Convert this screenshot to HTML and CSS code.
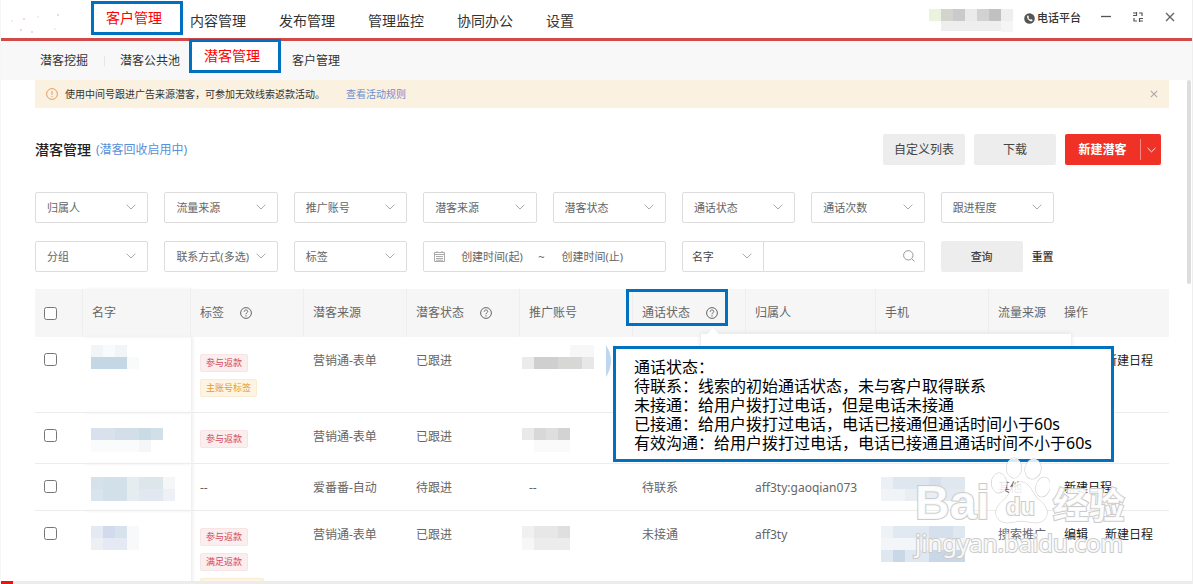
FILE: index.html
```html
<!DOCTYPE html>
<html lang="zh-CN">
<head>
<meta charset="utf-8">
<title>潜客管理</title>
<link rel="stylesheet" href="styles.css">
</head>
<body>
<svg class="defs" aria-hidden="true">
  <symbol id="chevron" viewBox="0 0 10 6"><path d="M.6.7 5 5 9.400.7" fill="none" stroke="currentColor"/></symbol>
  <symbol id="help" viewBox="0 0 12 12"><circle cx="6" cy="6" r="5.400" fill="none" stroke="currentColor"/><path d="M4.200 4.700C4.300 2.400 7.800 2.500 7.700 4.600 7.700 5.800 6 5.700 6 7.300M6 8.300v1.200" fill="none" stroke="currentColor"/></symbol>
  <symbol id="cross" viewBox="0 0 10 10"><path d="M1 1l8 8M9 1l-8 8" fill="none" stroke="currentColor" stroke-width="1.400"/></symbol>
</svg>
<div class="app">
  <header class="topbar">
    <div class="logo">
      <svg width="70" height="26" viewBox="0 0 70 26"><g fill="#f3c9c9"><circle cx="17" cy="9" r="1"/><circle cx="14" cy="20" r="1"/><circle cx="25" cy="22" r="1"/><circle cx="51" cy="5" r="1"/></g><g fill="#e3ecf0"><circle cx="31" cy="7" r="1"/><circle cx="48" cy="19" r="1"/><circle cx="5" cy="11" r="1"/></g></svg>
    </div>
    <nav class="nav">
      <a class="marked" href="#">客户管理</a>
      <a href="#">内容管理</a>
      <a href="#">发布管理</a>
      <a href="#">管理监控</a>
      <a href="#">协同办公</a>
      <a href="#">设置</a>
    </nav>
    <div class="tools">
      <svg class="account" width="84" height="23" viewBox="0 0 84 23"><path fill="#eaf3dc" d="M0 0h12v12H0z"/><path fill="#d4d4ce" d="M12 0h12v12H12z"/><path fill="#cacaca" d="M24 0h12v12H24z"/><path fill="#e9eaec" d="M36 0h12v12H36z"/><path fill="#d2d2d3" d="M48 0h12v12H48z"/><path fill="#c1c1c1" d="M60 0h12v12H60z"/><path fill="#eee" d="M72 0h12v12H72zM12 12h60v10H12z"/><path fill="#f5f5f5" d="M72 12h12v11H72z"/></svg>
      <a class="phone" href="#"><svg width="11" height="11" viewBox="0 0 11 11"><circle cx="5.500" cy="5.500" r="5.300" fill="#555"/><path d="M3.200 2.700 4.300 2.400 5 4.200 4.300 4.900 6.200 6.800 7 6.100 8.600 6.900 8.200 8.200C5.500 8.800 2.500 5.700 3.200 2.700z" fill="#fff"/></svg>电话平台</a>
      <button aria-label="最小化"><svg width="10" height="10" viewBox="0 0 10 10"><path d="M0 4.500h10" stroke="#555" stroke-width="1.300"/></svg></button>
      <button aria-label="还原"><svg width="10" height="10" viewBox="0 0 10 10" fill="none" stroke="#555" stroke-width="1.200"><path d="M0 1h3.500M3.500 0v3.500H0M6 1h3v3M1 6v3h3M6.500 10V6.500H10M7 9h3"/></svg></button>
      <button aria-label="关闭"><svg width="10" height="10"><use href="#cross"/></svg></button>
    </div>
  </header>
  <nav class="subnav">
    <a href="#">潜客挖掘</a>
    <span class="bar"></span>
    <a href="#">潜客公共池</a>
    <a class="marked" href="#">潜客管理</a>
    <a href="#">客户管理</a>
  </nav>
  <main class="content">
    <div class="alert">
      <svg width="12" height="12" viewBox="0 0 12 12" fill="none" stroke="#e59a63"><circle cx="6" cy="6" r="5.400"/><path d="M6 3v4M6 8v1"/></svg>
      <p>使用中间号跟进广告来源潜客，可参加无效线索返款活动。</p>
      <a href="#">查看活动规则</a>
      <button aria-label="关闭提示"><svg width="8" height="8"><use href="#cross"/></svg></button>
    </div>
    <div class="heading">
      <h1>潜客管理</h1>
      <a href="#">(潜客回收启用中)</a>
      <div class="actions">
        <button class="btn">自定义列表</button>
        <button class="btn">下载</button>
        <div class="split"><button>新建潜客</button><button class="more" aria-label="更多"><svg width="9" height="6"><use href="#chevron"/></svg></button></div>
      </div>
    </div>
    <form class="filters">
      <div class="pick"><select aria-label="归属人"><option>归属人</option></select><svg><use href="#chevron"/></svg></div>
      <div class="pick"><select aria-label="流量来源"><option>流量来源</option></select><svg><use href="#chevron"/></svg></div>
      <div class="pick"><select aria-label="推广账号"><option>推广账号</option></select><svg><use href="#chevron"/></svg></div>
      <div class="pick"><select aria-label="潜客来源"><option>潜客来源</option></select><svg><use href="#chevron"/></svg></div>
      <div class="pick"><select aria-label="潜客状态"><option>潜客状态</option></select><svg><use href="#chevron"/></svg></div>
      <div class="pick"><select aria-label="通话状态"><option>通话状态</option></select><svg><use href="#chevron"/></svg></div>
      <div class="pick"><select aria-label="通话次数"><option>通话次数</option></select><svg><use href="#chevron"/></svg></div>
      <div class="pick"><select aria-label="跟进程度"><option>跟进程度</option></select><svg><use href="#chevron"/></svg></div>
      <div class="pick"><select aria-label="分组"><option>分组</option></select><svg><use href="#chevron"/></svg></div>
      <div class="pick"><select aria-label="联系方式"><option>联系方式(多选)</option></select><svg><use href="#chevron"/></svg></div>
      <div class="pick"><select aria-label="标签"><option>标签</option></select><svg><use href="#chevron"/></svg></div>
      <div class="dates">
        <svg width="11" height="11" viewBox="0 0 11 11" fill="none" stroke="#aaa"><path d="M.5 1.500h10v9H.5zM.5 3.500h10M2 5.500h7M2 7.500h7M2 9.200h7M3 0v2M8 0v2"/></svg>
        <input aria-label="创建时间起" placeholder="创建时间(起)"><span>~</span><input aria-label="创建时间止" placeholder="创建时间(止)">
      </div>
      <div class="search">
        <div class="pick"><select aria-label="搜索字段"><option>名字</option></select><svg><use href="#chevron"/></svg></div>
        <input aria-label="搜索内容">
        <svg class="lens" width="12" height="12" viewBox="0 0 12 12" fill="none" stroke="#999"><circle cx="5.300" cy="5.300" r="4.700"/><path d="M8.700 8.700 11.500 11.500"/></svg>
      </div>
      <div class="submit"><button class="btn" type="button">查询</button><button class="reset" type="reset">重置</button></div>
    </form>
    <table class="grid">
      <colgroup><col class="c-check"><col class="c-name"><col class="c-std"><col class="c-source"><col class="c-std"><col class="c-std"><col class="c-std"><col class="c-owner"><col class="c-std"><col class="c-flow"><col></colgroup>
      <thead>
        <tr>
          <th><input type="checkbox" aria-label="全选"></th>
          <th class="fixed">名字</th>
          <th>标签<svg class="help"><use href="#help"/></svg></th>
          <th>潜客来源</th>
          <th>潜客状态<svg class="help"><use href="#help"/></svg></th>
          <th>推广账号</th>
          <th class="anchor">通话状态<svg class="help"><use href="#help"/></svg>
            <div class="popover"></div>
            <div class="outline"></div>
            <svg class="crescent" width="6" height="32" viewBox="0 0 6 32"><path d="M0 0Q10 16 0 32z" fill="#bdd7ee"/></svg>
            <div class="note"><p>通话状态：</p><p>待联系：线索的初始通话状态，未与客户取得联系</p><p>未接通：给用户拨打过电话，但是电话未接通</p><p>已接通：给用户拨打过电话，电话已接通但通话时间小于60s</p><p>有效沟通：给用户拨打过电话，电话已接通且通话时间不小于60s</p></div>
          </th>
          <th>归属人</th>
          <th>手机</th>
          <th>流量来源</th>
          <th>操作</th>
        </tr>
      </thead>
      <tbody>
        <tr class="r-tall">
          <td><input type="checkbox" aria-label="选择第1行"></td>
          <td class="fixed"><svg class="mosaic" width="48" height="24" viewBox="0 0 48 24"><path fill="#f0f5f8" d="M0 0h12v12H0zM24 0h12v12H24z"/><path fill="#f9fbfb" d="M12 0h12v12H12zM36 12h12v12H36z"/><path fill="#c4d7e5" d="M0 12h36v12H0z"/></svg></td>
          <td><div class="tags"><span class="tag">参与返款</span><span class="tag amber">主账号标签</span></div></td>
          <td>营销通-表单</td>
          <td>已跟进</td>
          <td><svg class="mosaic acct" width="72" height="24" viewBox="0 0 72 24"><path fill="#f7f7f7" d="M48 0h24v12H48z"/><path fill="#ebebeb" d="M0 12h12v12H0z"/><path fill="#cfcfcf" d="M12 12h24v12H12z"/><path fill="#d7d7d5" d="M36 12h24v12H36z"/><path fill="#e7e7e7" d="M60 12h12v12H60z"/></svg></td>
          <td></td><td></td><td></td><td></td>
          <td><div class="ops"><a href="#">编辑</a><a href="#">新建日程</a></div></td>
        </tr>
        <tr class="r-mid">
          <td><input type="checkbox" aria-label="选择第2行"></td>
          <td class="fixed"><svg class="mosaic" width="72" height="24" viewBox="0 0 72 24"><path fill="#d9e1ee" d="M0 0h12v12H0z"/><path fill="#d9e1ea" d="M12 0h12v12H12z"/><path fill="#d2dfe8" d="M24 0h24v12H24z"/><path fill="#c9dce5" d="M48 0h12v12H48z"/><path fill="#d0dfe8" d="M60 0h12v12H60z"/><path fill="#fafbfb" d="M0 12h48v12H0z"/><path fill="#f4f6f8" d="M48 12h12v12H48z"/></svg></td>
          <td><div class="tags"><span class="tag">参与返款</span></div></td>
          <td>营销通-表单</td>
          <td>已跟进</td>
          <td><svg class="mosaic acct" width="48" height="24" viewBox="0 0 48 24"><path fill="#e9e9e9" d="M0 0h12v12H0z"/><path fill="#d8d8d8" d="M12 0h12v12H12z"/><path fill="#dedede" d="M24 0h12v12H24z"/><path fill="#d2d4d4" d="M36 0h12v12H36z"/><path fill="#fafafa" d="M12 12h36v12H12z"/></svg></td>
          <td></td><td></td><td></td><td></td><td></td>
        </tr>
        <tr class="r-short">
          <td><input type="checkbox" aria-label="选择第3行"></td>
          <td class="fixed"><svg class="mosaic" width="84" height="24" viewBox="0 0 84 24"><path fill="#d5e2ea" d="M0 0h12v12H0z"/><path fill="#d2e0e9" d="M12 0h24v24H12z"/><path fill="#e6edf0" d="M36 0h12v24H36z"/><path fill="#dde6eb" d="M48 0h24v12H48z"/><path fill="#f5f6f8" d="M72 0h12v12H72z"/><path fill="#dae4ee" d="M0 12h12v12H0z"/><path fill="#e1e8f0" d="M48 12h24v12H48z"/><path fill="#eef0f6" d="M72 12h12v12H72z"/></svg></td>
          <td>--</td>
          <td>爱番番-自动</td>
          <td>待跟进</td>
          <td>--</td>
          <td>待联系</td>
          <td>aff3ty:gaoqian073</td>
          <td><svg class="mosaic tel" width="84" height="24" viewBox="0 0 84 24"><path fill="#eaf0f5" d="M0 0h12v12H0z"/><path fill="#dee7ef" d="M12 0h36v12H12z"/><path fill="#d8e1eb" d="M48 0h12v12H48z"/><path fill="#e0e7ef" d="M60 0h24v12H60z"/><path fill="#f0f4f7" d="M0 12h24v12H0z"/><path fill="#e8eef4" d="M24 12h36v12H24z"/><path fill="#e3eaf1" d="M60 12h24v12H60z"/></svg></td>
          <td>其他</td>
          <td><div class="ops"><a href="#">新建日程</a></div></td>
        </tr>
        <tr class="r-last">
          <td><input type="checkbox" aria-label="选择第4行"></td>
          <td class="fixed"><svg class="mosaic" width="48" height="24" viewBox="0 0 48 24"><path fill="#e4e9f3" d="M0 0h12v12H0zM12 12h24v12H12z"/><path fill="#d2daee" d="M12 0h12v12H12z"/><path fill="#d7e3ec" d="M24 0h12v12H24z"/><path fill="#f7f9fa" d="M36 0h12v24H36z"/><path fill="#ecf0f4" d="M0 12h12v12H0z"/></svg></td>
          <td><div class="tags"><span class="tag">参与返款</span><span class="tag">满足返款</span><span class="tag amber wide"></span></div></td>
          <td>营销通-表单</td>
          <td>已跟进</td>
          <td><svg class="mosaic acct" width="48" height="24" viewBox="0 0 48 24"><path fill="#f0f0f0" d="M0 0h12v12H0z"/><path fill="#e7e7e7" d="M12 0h24v12H12z"/><path fill="#dfdfdf" d="M36 0h12v12H36z"/><path fill="#f7f7f7" d="M0 12h12v12H0z"/><path fill="#ececec" d="M12 12h36v12H12z"/></svg></td>
          <td>未接通</td>
          <td>aff3ty</td>
          <td><svg class="mosaic tel" width="84" height="36" viewBox="0 0 84 36"><path fill="#edf2f7" d="M0 0h12v12H0z"/><path fill="#e0e8f1" d="M12 0h36v12H12z"/><path fill="#d5e0ec" d="M48 0h24v12H48z"/><path fill="#dfe7f1" d="M72 0h12v12H72z"/><path fill="#f2f6f9" d="M0 12h84v12H0z"/><path fill="#dfe8f1" d="M0 24h12v12H0zM24 24h24v12H24z"/><path fill="#c9d8e6" d="M12 24h12v12H12zM48 24h36v12H48z"/></svg></td>
          <td>搜索推广</td>
          <td><div class="ops"><a href="#">编辑</a><a href="#">新建日程</a></div></td>
        </tr>
      </tbody>
    </table>
  </main>
  <footer class="foot"></footer>
  <div class="scrollbar"></div>
  <div class="watermark" aria-hidden="true">
    <div class="brand">
      <span class="bai">Bai</span>
      <span class="paw"><svg width="60" height="70" viewBox="0 0 60 70"><g fill="#fff" fill-opacity=".85" stroke="#ccc"><ellipse cx="9" cy="26" rx="7.500" ry="10"/><ellipse cx="24" cy="11" rx="7.500" ry="10"/><ellipse cx="43" cy="12" rx="8" ry="10" transform="rotate(12 43 12)"/><ellipse cx="53" cy="30" rx="7" ry="10" transform="rotate(14 53 30)"/><path d="M31 25C40 25 42 36 48 42 56 48 60 55 55 62 49 69 39 64 31 64 24 64 15 69 8 62 3 55 7 48 15 42 21 36 22 25 31 25z"/></g></svg><b>du</b></span>
      <span class="exp">经验</span>
    </div>
    <div class="site">jingyan.baidu.com</div>
  </div>
</div>
</body>
</html>
```

FILE: styles.css
```css
* { box-sizing: border-box; }
body { margin: 0; font-family: "Noto Sans", "Noto Sans CJK SC", sans-serif; font-size: 12px; line-height: 18px; color: #666; background: #fff; }
a { color: inherit; text-decoration: none; white-space: nowrap; }
p, h1 { margin: 0; }
button, input, select { margin: 0; padding: 0; border: 0; background: none; font: inherit; color: inherit; border-radius: 0; }
button { display: flex; align-items: center; justify-content: center; white-space: nowrap; }
svg { flex: none; }
.defs { display: none; }

.app { position: relative; display: flex; flex-direction: column; height: 100vh; overflow: hidden; border-left: 1px solid #f6f6f6; border-right: 1px solid #eee; }

.topbar { display: flex; height: 41px; border-bottom: 3px solid #d24a48; }
.logo { width: 90px; padding: 10px 0 0 6px; }
.nav { display: flex; gap: 33px; align-items: center; font-size: 14px; color: #333; }
.marked { display: flex; align-items: center; width: 92px; height: 34px; padding-left: 12px; border: 3px solid #0070c0; background: #fff; color: #f00; font-size: 14px; }
.nav .marked { margin: -3px -26px 0 0; }
.nav a:not(.marked) { padding-top: 3px; }
.tools { display: flex; align-items: flex-start; margin-left: auto; padding: 9px 17px 0 0; }
.tools button { width: 10px; height: 16px; margin-left: 22px; }
.tools .phone + button { margin-left: 20px; }
.phone { display: flex; align-items: center; gap: 2px; margin-left: 11px; font-size: 11px; font-weight: 500; color: #333; }

.subnav { display: flex; flex: none; align-items: center; height: 39px; padding-left: 39px; background: #f8f8f8; color: #333; }
.subnav .bar { width: 1px; height: 10px; margin: 0 15px 0 16px; background: #e6e6e6; }
.subnav .marked { position: relative; margin: -9px 11px 0 9px; }

.content { flex: 1; min-height: 0; overflow: hidden; padding: 0 23px 0 34px; }
.alert { display: flex; align-items: center; height: 28px; padding: 0 11px; background: #faf1e0; font-size: 10px; color: #333; }
.alert p { margin: 0 21px 0 7px; }
.alert a { color: #6a8fd0; }
.alert button { margin-left: auto; color: #aaa; }

.heading { display: flex; align-items: center; margin: 26px 8px 27px 0; }
.heading h1 { margin-right: 5px; font-size: 14px; line-height: 20px; font-weight: 500; color: #222; }
.heading > a { color: #5b8fd8; }
.actions { display: flex; gap: 9px; margin-left: auto; }
.btn { width: 82px; height: 31px; border-radius: 2px; background: #ededed; color: #444; }
.split { display: flex; align-items: center; height: 31px; border-radius: 2px; background: #f03226; color: #fff; font-weight: 700; }
.split button { width: 75px; height: 21px; }
.split .more { width: 21px; border-left: 1px solid #f78a83; }

.filters { display: grid; grid-template-columns: repeat(8, 1fr); gap: 18px 16px; margin-right: 115px; margin-bottom: 17px; font-size: 11px; }
.pick { position: relative; height: 31px; }
.pick select { width: 100%; height: 100%; padding-left: 11px; border: 1px solid #ddd; border-radius: 2px; appearance: none; color: #666; }
.pick svg { position: absolute; right: 12px; top: 12px; width: 10px; height: 6px; color: #aaa; pointer-events: none; }
.dates { grid-column: span 2; display: flex; align-items: center; height: 31px; padding-left: 10px; border: 1px solid #ddd; border-radius: 2px; }
.dates input { width: 64px; }
.dates input:first-of-type { margin-left: 16px; }
.dates span { margin: 0 17px 0 13px; }
input::placeholder { color: #666; opacity: 1; }
.search { position: relative; grid-column: span 2; display: flex; }
.search .pick { width: 82px; }
.search select { padding-left: 9px; border-radius: 2px 0 0 2px; color: #444; }
.search > input { flex: 1; min-width: 0; height: 31px; border: 1px solid #ddd; border-left: 0; border-radius: 0 2px 2px 0; }
.lens { position: absolute; right: 10px; top: 9px; }
.submit { display: flex; gap: 9px; color: #333; font-size: 11px; font-weight: 500; }
.reset { color: #333; }

.grid { width: 100%; table-layout: fixed; border-collapse: separate; border-spacing: 0; }
.c-check { width: 48px; }
.c-name { width: 108px; }
.c-std { width: 113px; }
.c-source { width: 103px; }
.c-owner { width: 130px; }
.c-flow { width: 66px; }
th, td { padding: 0 0 0 9px; white-space: nowrap; }
th { height: 48px; text-align: left; font-weight: 400; background: #f6f6f6; border-right: 1px solid #eee; }
th:nth-last-child(-n+2) { border-right: 0; }
td { padding-top: 15px; vertical-align: top; border-bottom: 1px solid #ececec; }
th input, td input { display: block; width: 13px; height: 13px; }
td input { margin-top: 1px; }
.fixed { box-shadow: 2px 0 3px #eee; }
.help { width: 12px; height: 12px; margin-left: 16px; vertical-align: -2px; }
.r-tall td { height: 76px; }
.r-mid td { height: 51px; }
.r-short td { height: 47px; }
.r-last td { height: 92px; border-bottom: 0; }
.mosaic { display: block; margin-left: -1px; }
.r-tall .mosaic { margin-top: -7px; }
.r-short .mosaic { margin-top: -2px; }
.acct { margin-left: -7px; }
.tel { margin-left: -4px; }
.tags { display: flex; flex-direction: column; align-items: flex-start; gap: 7px; padding-top: 2px; }
.tag { height: 18px; padding: 0 5px; border: 1px solid #f8e3e5; border-radius: 2px; background: #fbeeef; color: #d5485c; font-size: 9px; line-height: 16px; }
.amber { border-color: #faebd3; background: #fdf4e4; color: #e69a2e; }
.wide { width: 64px; }
.ops { display: flex; gap: 17px; color: #222; }

.anchor { position: relative; z-index: 2; }
.popover { position: absolute; left: 68px; top: 45px; width: 370px; height: 60px; background: #fff; box-shadow: 0 0 5px #ddd; }
.popover::before { content: ""; position: absolute; left: 8px; top: -4px; width: 8px; height: 8px; background: #fff; transform: rotate(45deg); }
.outline { position: absolute; left: -7px; top: 0; width: 102px; height: 37px; border: 3px solid #0070c0; }
.crescent { position: absolute; left: -27px; top: 56px; }
.note { position: absolute; left: -20px; top: 57px; width: 501px; padding: 9px 0 6px 18px; border: 3px solid #0070c0; background: #fff; color: #000; font-size: 16px; line-height: 19px; }

.foot { flex: none; height: 3px; background: linear-gradient(90deg, #e11 12px, #ececec 12px); }
.scrollbar { position: absolute; right: 1px; top: 80px; width: 4px; height: 204px; border-radius: 2px; background: #ddd; }
.watermark { position: absolute; z-index: 3; right: 63px; bottom: 25px; width: 214px; color: rgba(255, 255, 255, .9); -webkit-text-stroke: 2px #ccc; paint-order: stroke fill; pointer-events: none; }
.brand { display: flex; align-items: flex-end; height: 70px; font-family: "Liberation Sans", "Noto Sans CJK SC", sans-serif; font-weight: 700; }
.bai { font-size: 48px; line-height: 48px; }
.paw { position: relative; }
.paw svg { display: block; }
.paw b { position: absolute; left: 16px; top: 38px; font-size: 24px; line-height: 24px; }
.exp { margin-left: 3px; font-size: 36px; line-height: 40px; }
.site { font-size: 24px; line-height: 32px; }
```
